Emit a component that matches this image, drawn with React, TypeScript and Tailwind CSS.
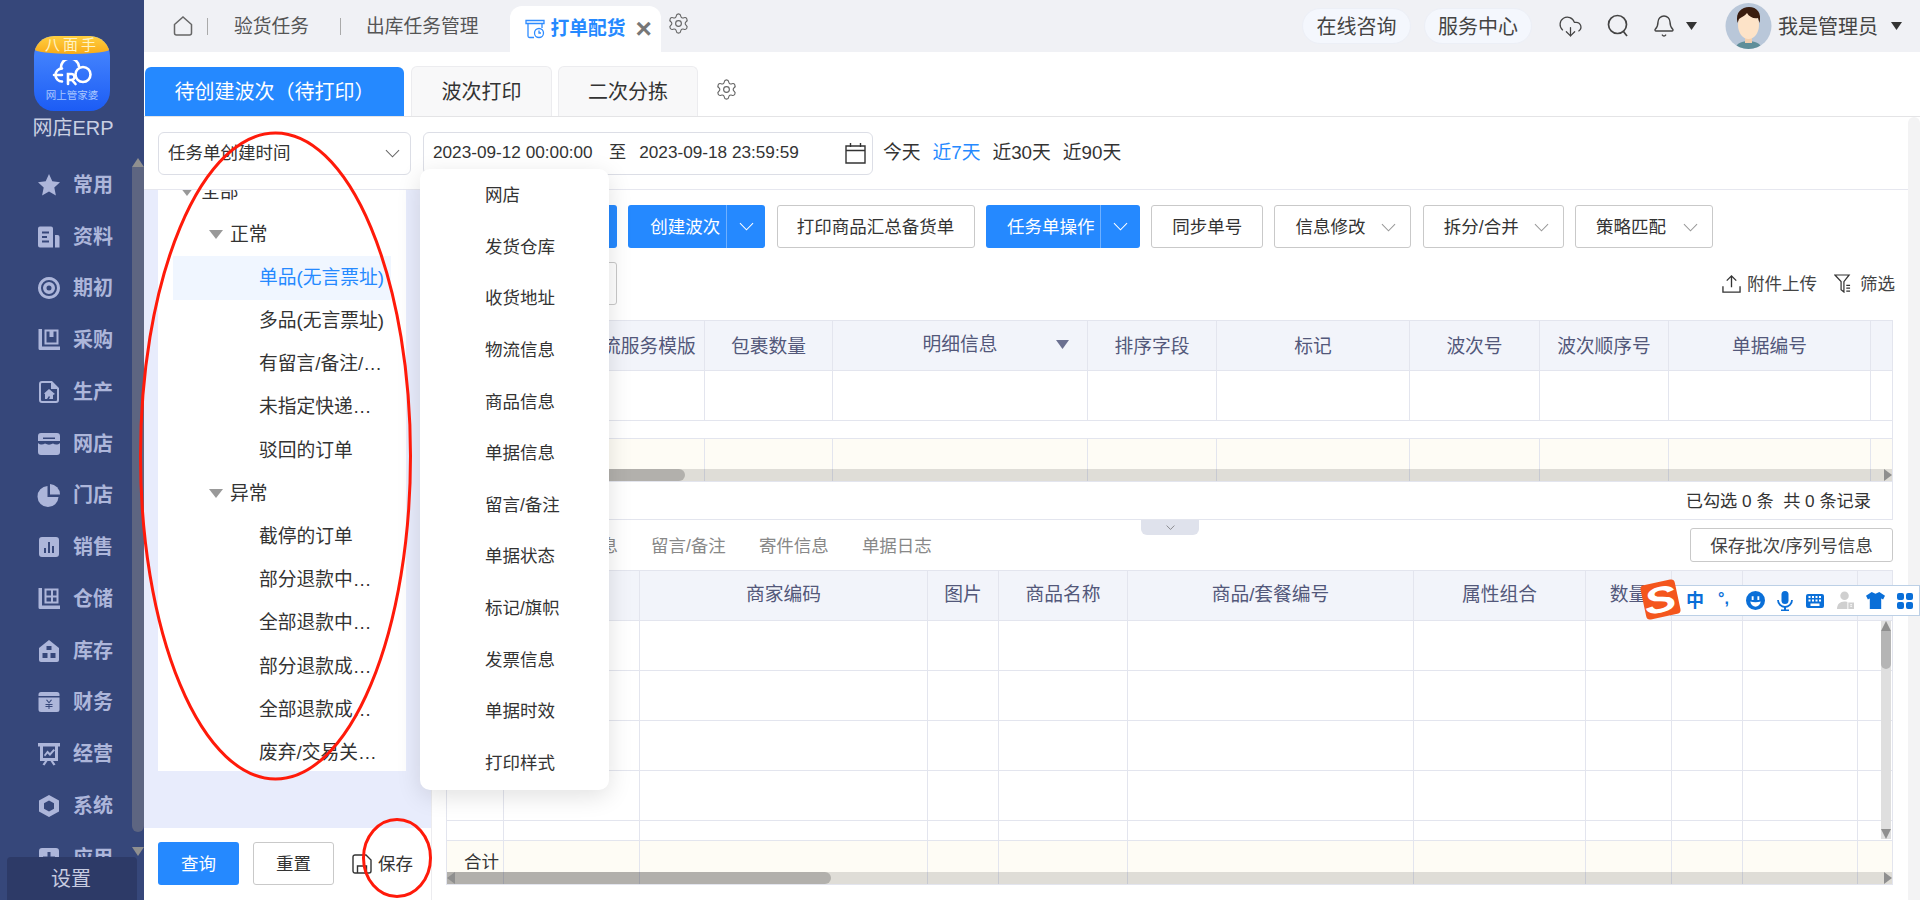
import { Bell, CloudDownload, Settings } from 'lucide-react';
import type { ReactNode } from 'react';

const line = 'border-[#e3e5ee]';

function Chevron({ className = 'w-[15px] h-[9px] text-[#888]' }: { className?: string }) {
  return (
    <svg viewBox="0 0 16 9" className={`shrink-0 ${className}`} fill="none" stroke="currentColor" strokeWidth="1.1">
      <path d="M1 1l7 7 7-7" />
    </svg>
  );
}

function Caret({ className = 'w-[11px] h-[8px] text-[#333]' }: { className?: string }) {
  return (
    <svg viewBox="0 0 10 8" className={`shrink-0 ${className}`} fill="currentColor" preserveAspectRatio="none">
      <path d="M0 0h10L5 8z" />
    </svg>
  );
}

const navIcons: Record<string, ReactNode> = {
  常用: <path d="M12 1l3.300 7.300 7.700.9-5.700 5.300 1.600 8L12 18.400 5.100 22.500l1.600-8L1 9.200l7.700-.9z" />,
  资料: (
    <>
      <path fillRule="evenodd" d="M1 3.500A2 2 0 013 1.500h11a2 2 0 012 2v19H3a2 2 0 01-2-2zM5 6.500v2h7v-2zM5 11v2h5v-2zM5 15.500v2h7v-2z" />
      <path d="M18 10h2.500a2 2 0 012 2v10.500H18z" />
    </>
  ),
  期初: (
    <path fillRule="evenodd" d="M12 1a11 11 0 11-.01 0zm0 3a8 8 0 100 16 8 8 0 000-16zm0 2a6 6 0 110 12 6 6 0 010-12zm0 3.500a2.500 2.500 0 100 5 2.500 2.500 0 000-5z" />
  ),
  采购: (
    <path fillRule="evenodd" d="M1.500 1h3.500v17.500h18V22H3a1.500 1.500 0 01-1.500-1.500zM7.500 1.500h14v15h-14zm2 2v11h10v-11h-3v5.500h-4V3.500z" />
  ),
  生产: (
    <path fillRule="evenodd" d="M5 1h10l7 7v12a3 3 0 01-3 3H5a3 3 0 01-3-3V4a3 3 0 013-3zm0 2a1 1 0 00-1 1v16a1 1 0 001 1h14a1 1 0 001-1V9h-6V3zm7 6l6 5-2 1v4h-4l1-2-1-1-2 3H8v-5l-1-.5z" />
  ),
  网店: (
    <path fillRule="evenodd" d="M4 1h16a3 3 0 013 3v5H1V4a3 3 0 013-3zM1 11c2 2 5 2 7 .5 2.500 1.500 5.500 1.500 8 0 2 1.500 5 1.500 7-.5v9a3 3 0 01-3 3H4a3 3 0 01-3-3zm5-5.500v1.500h12V5.500z" />
  ),
  门店: (
    <>
      <path d="M10.500 3v11h11A10.500 10.500 0 1110.500 3z" />
      <path d="M13 1a10.500 10.500 0 0110 10.500H13z" />
    </>
  ),
  销售: <path fillRule="evenodd" d="M5 2h14a3 3 0 013 3v14a3 3 0 01-3 3H5a3 3 0 01-3-3V5a3 3 0 013-3zm2 11v5h2v-5zm4-6v11h2V7zm4 4v7h2v-7z" />,
  仓储: (
    <path fillRule="evenodd" d="M1.500 1h3.500v17.500h18V22H3a1.500 1.500 0 01-1.500-1.500zM7.500 1.500h14v15h-14zm2 2v5h4.500v-5zm6.500 0v5h3.500v-5zm-6.500 7v4h4.500v-4zm6.500 0v4h3.500v-4z" />
  ),
  库存: <path fillRule="evenodd" d="M12 1l10 8v12a2 2 0 01-2 2H4a2 2 0 01-2-2V9zM9.500 7v4h5V7zM5.500 14v5h5v-5zm8 0v5h5v-5z" />,
  财务: (
    <>
      <path d="M4 2h16a2.500 2.500 0 012.500 2.500V6h-21V4.500A2.500 2.500 0 014 2z" />
      <path fillRule="evenodd" d="M1.500 7.500h21v12A2.500 2.500 0 0120 22H4a2.500 2.500 0 01-2.500-2.500zM9 10l3 3.500 3-3.500-1-.5-2 2.500-2-2.500zm-.5 4v1h3v1h-3v1h3v2h1v-2h3v-1h-3v-1h3v-1z" />
    </>
  ),
  经营: (
    <path fillRule="evenodd" d="M1 1h22v3.500h-2V19h-5l2.500 3.500-2 1L13.500 19h-3l-3 4.500-2-1L8 19H3V4.500H1zm5 3.500V16h12V4.500zM7 13l3.500-4.500L13 11l3.500-4 1.500 1.200-5 5.800-2.500-2.500-2.500 3z" />
  ),
  系统: <path fillRule="evenodd" d="M12 1l10 5.500v11L12 23 2 17.500v-11zm0 5.500l-5 2.800v5.400l5 2.800 5-2.800V9.300z" />,
  应用: <path fillRule="evenodd" d="M5 2h14a3 3 0 013 3v14a3 3 0 01-3 3H5a3 3 0 01-3-3V5a3 3 0 013-3zm5.500 4v4.500H6v3h4.500V18h3v-4.500H18v-3h-4.500V6z" />,
};

const navItems = ['常用', '资料', '期初', '采购', '生产', '网店', '门店', '销售', '仓储', '库存', '财务', '经营', '系统', '应用'];

function Logo() {
  return (
    <div className="w-[76px] h-[75px] ml-[34px] rounded-[20px] overflow-hidden bg-gradient-to-b from-[#4d8bff] to-[#1c5cf5] flex flex-col items-center">
      <div className="w-full h-[18px] bg-gradient-to-b from-[#ffcf3f] to-[#f9ab14] rounded-b-[50%_5px] text-[#fff3c4] text-[15px] leading-[18px] tracking-[3px] text-center whitespace-nowrap">八面手</div>
      <svg viewBox="0 0 42 26" className="w-[42px] h-[26px] mt-[6px]" fill="none" stroke="#fff" strokeWidth="2.600" strokeLinecap="round">
        <path d="M3 15h8M11 8.500a6.500 6.500 0 100 13" />
        <path d="M10 8.500a9 9 0 0118-2" />
        <circle cx="32" cy="14.500" r="7.500" />
        <path d="M17 24V14h3.500a3 3 0 010 6H17M21 20l3.500 4" />
      </svg>
      <div className="text-[10.500px] leading-[12px] mt-[3px] text-[#a9c7ff] whitespace-nowrap">网上管家婆</div>
    </div>
  );
}

function Sidebar() {
  return (
    <aside className="relative w-[144px] h-[900px] shrink-0 overflow-hidden bg-[#36477a] pt-[36px]">
      <Logo />
      <div className="mt-[5px] h-[24px] leading-[24px] text-center text-[20px] text-[#c9cfe2] pl-[2px]">网店ERP</div>
      <nav className="mt-[19px]">
        {navItems.map((name) => (
          <div key={name} className="h-[51.750px] flex items-center pl-[37px] gap-[12px] text-[#adb6da]">
            <svg viewBox="0 0 24 24" className="w-[24px] h-[24px] shrink-0" fill="currentColor">
              {navIcons[name]}
            </svg>
            <span className="text-[20px] font-bold">{name}</span>
          </div>
        ))}
      </nav>
      <div className="absolute right-0 top-[167px] w-[12px] h-[665px] bg-[#5d6581] rounded-b-[6px]" />
      <div className="absolute right-0 top-[158px] w-0 h-0 border-x-[6px] border-x-transparent border-b-[9px] border-b-[#8f8f8f]" />
      <div className="absolute right-0 top-[847px] w-0 h-0 border-x-[6px] border-x-transparent border-t-[9px] border-t-[#8f8f8f]" />
      <div className="absolute left-[7px] bottom-0 w-[130px] h-[43px] rounded-t-[4px] bg-[#2d3a67] text-[#c6cbe0] text-[20px] flex items-center justify-center pt-[1px] pr-[2px]">设置</div>
    </aside>
  );
}

function Avatar() {
  return (
    <svg viewBox="0 0 47 46" className="ml-[28px] w-[47px] h-[46px] shrink-0">
      <defs>
        <clipPath id="avatar-clip">
          <circle cx="23.500" cy="23" r="23" />
        </clipPath>
      </defs>
      <g clipPath="url(#avatar-clip)">
        <rect width="47" height="46" fill="#b9c7d9" />
        <path d="M10 46c1-6 8-8 13.500-8s12.500 2 13.500 8z" fill="#5f8e99" />
        <rect x="20" y="30" width="7" height="10" fill="#f3cfae" />
        <ellipse cx="23.500" cy="22" rx="10.500" ry="14" fill="#fde3c8" />
        <path d="M12.500 20C10 9 17 4 24 4c8 0 13 6 10.500 16L33 15c-4 1-9-1-11-5-2 3-6 4-8 6z" fill="#3a1d0f" />
      </g>
    </svg>
  );
}

function TopBar() {
  return (
    <header className="h-[52px] bg-[#f0f1f5] flex items-center shrink-0 text-[18.750px] text-[#555]">
      <svg viewBox="0 0 20 20" className="ml-[29px] w-[20px] h-[20px] text-[#666]" fill="none" stroke="currentColor" strokeWidth="1.500">
        <path d="M1.500 8.500L10 1l8.500 7.500V17a2 2 0 01-2 2h-13a2 2 0 01-2-2z" />
      </svg>
      <div className="ml-[14px] w-px h-[17px] bg-[#aaa]" />
      <span className="ml-[26px] pt-[3px]">验货任务</span>
      <div className="ml-[31px] w-px h-[17px] bg-[#aaa]" />
      <span className="ml-[25px] pt-[3px]">出库任务管理</span>
      <div className="ml-[31px] self-end w-[151px] h-[46px] bg-white rounded-t-[12px] flex items-center pl-[15px]">
        <svg viewBox="0 0 20 20" className="w-[20px] h-[20px] text-[#2f8cff]" fill="none" stroke="currentColor" strokeWidth="1.300">
          <path d="M1 1.500h18v3H1zM3 4.500V17a1.500 1.500 0 001.500 1.500H9M17 4.500V9" />
          <circle cx="14" cy="14" r="4.500" />
          <path d="M14 11.500V14h2" />
        </svg>
        <span className="ml-[6px] font-bold text-[#2589ff] pt-[1px]">打单配货</span>
        <span className="ml-[10px] text-[28px] leading-none font-bold text-[#777]">×</span>
      </div>
      <Settings className="ml-[6px] w-[23px] h-[23px] text-[#666] -mt-[5px]" strokeWidth={1.200} />
      <div className="ml-auto flex items-center">
        <div className="w-[109px] h-[36px] rounded-[18px] bg-[#f4f7fd] border border-[#eceff6] flex items-center justify-center text-[20px] text-[#444] pt-[1px]">在线咨询</div>
        <div className="ml-[13px] w-[108px] h-[36px] rounded-[18px] bg-[#f4f7fd] border border-[#eceff6] flex items-center justify-center text-[20px] text-[#444] pt-[1px]">服务中心</div>
        <CloudDownload className="ml-[26px] w-[25px] h-[25px] text-[#444]" strokeWidth={1.200} />
        <svg viewBox="0 0 22 24" className="ml-[24px] w-[22px] h-[24px] text-[#444]" fill="none" stroke="currentColor" strokeWidth="1.700">
          <circle cx="10.500" cy="10.500" r="9" />
          <path d="M16 17l4 5" />
        </svg>
        <Bell className="ml-[23px] w-[24px] h-[28px] text-[#444]" strokeWidth={1.400} />
        <Caret className="ml-[10px] w-[11px] h-[8px] text-[#333]" />
        <Avatar />
        <span className="ml-[6px] text-[20px] text-[#444] pt-[1px]">我是管理员</span>
        <Caret className="ml-[13px] mr-[18px] w-[11px] h-[8px] text-[#333]" />
      </div>
    </header>
  );
}

function SubTabs() {
  return (
    <div className="h-[65px] shrink-0 border-b border-[#e4e4e6] flex items-end pl-px text-[20px]">
      <div className="w-[259px] h-[49px] bg-[#2589ff] rounded-t-[6px] text-white flex items-center justify-center">待创建波次（待打印）</div>
      <div className="ml-[7px] w-[141px] h-[50px] bg-[#f8f8f9] border border-b-0 border-[#ececef] rounded-t-[6px] text-[#333] flex items-center justify-center">波次打印</div>
      <div className="ml-[6px] w-[140px] h-[50px] bg-[#f8f8f9] border border-b-0 border-[#ececef] rounded-t-[6px] text-[#333] flex items-center justify-center">二次分拣</div>
      <Settings className="ml-[17px] mb-[15px] w-[23px] h-[23px] text-[#666]" strokeWidth={1.200} />
    </div>
  );
}

function FilterRow() {
  return (
    <div className="h-[73px] shrink-0 border-b border-[#e6e7ef] flex items-center pl-[14px]">
      <div className="w-[253px] h-[43px] rounded-[6px] border border-[#dcdee6] flex items-center pl-[9px] pr-[10px] text-[17.500px] text-[#333]">
        <span className="flex-1">任务单创建时间</span>
        <Chevron className="w-[15px] h-[9px] text-[#666]" />
      </div>
      <div className="ml-[12px] w-[450px] h-[43px] rounded-[6px] border border-[#dcdee6] flex items-center pl-[9px] text-[17.200px] text-[#333]">
        <span className="w-[161px] whitespace-nowrap">2023-09-12 00:00:00</span>
        <span className="ml-[15px]">至</span>
        <span className="ml-[13px] w-[161px] whitespace-nowrap">2023-09-18 23:59:59</span>
        <svg viewBox="0 0 21 22" className="ml-[45px] w-[21px] h-[22px] text-[#333]" fill="none" stroke="currentColor" strokeWidth="1.400">
          <path d="M1 4h19v17H1zM1 8.500h19M5.500 1v4M15.500 1v4" />
        </svg>
      </div>
      <div className="ml-[10px] flex items-center gap-[12px] text-[18.750px] text-[#333] pt-[1px]">
        <span>今天</span>
        <span className="text-[#2589ff]">近7天</span>
        <span>近30天</span>
        <span>近90天</span>
      </div>
    </div>
  );
}

type TreeRow = { label: string; group?: boolean; active?: boolean };

const tree: TreeRow[] = [
  { label: '正常', group: true },
  { label: '单品(无言票址)', active: true },
  { label: '多品(无言票址)' },
  { label: '有留言/备注/旗帜' },
  { label: '未指定快递公司' },
  { label: '驳回的订单' },
  { label: '异常', group: true },
  { label: '截停的订单' },
  { label: '部分退款中的订单' },
  { label: '全部退款中的订单' },
  { label: '部分退款成功订单' },
  { label: '全部退款成功订单' },
  { label: '废弃/交易关闭订单' },
];

function LeftPanel() {
  return (
    <div className="w-[288px] shrink-0 border-r border-[#ececef] flex flex-col">
      <div className="h-[638px] bg-[#e8ecfc] px-[14px]">
        <div className="w-[248px] h-[581px] overflow-hidden bg-white">
          <div className="-mt-[20px] text-[18.750px] text-[#333]">
            <div className="h-[43.200px] flex items-center pl-[22px]">
              <Caret className="w-[14px] h-[9px] text-[#999]" />
              <span className="ml-[7px]">全部</span>
            </div>
            {tree.map((row) =>
              row.group ? (
                <div key={row.label} className="h-[43.200px] flex items-center pl-[51px]">
                  <Caret className="w-[14px] h-[9px] text-[#999]" />
                  <span className="ml-[7px]">{row.label}</span>
                </div>
              ) : (
                <div key={row.label} className={`h-[43.200px] mx-[15px] flex items-center pl-[86px] ${row.active ? 'bg-[#f0f6ff] text-[#2589ff]' : ''}`}>
                  <span className="w-[128px] truncate">{row.label}</span>
                </div>
              ),
            )}
          </div>
        </div>
      </div>
      <div className="flex-1 flex items-center pl-[14px] pb-[1px] text-[17.500px]">
        <button className="w-[81px] h-[43px] rounded-[3px] bg-[#2589ff] text-white pt-[1px]">查询</button>
        <button className="ml-[14px] w-[81px] h-[43px] rounded-[3px] border border-[#c9c9c9] text-[#333] pt-[1px]">重置</button>
        <svg viewBox="0 0 20 20" className="ml-[18px] w-[20px] h-[20px] text-[#333]" fill="none" stroke="currentColor" strokeWidth="1.400">
          <path d="M3 1h11l5 5v11a2 2 0 01-2 2H3a2 2 0 01-2-2V3a2 2 0 012-2zM5.500 19v-7h9v7" />
        </svg>
        <span className="ml-[6px] text-[#333] pt-[1px]">保存</span>
      </div>
    </div>
  );
}

function OutlineBtn({ className, children }: { className: string; children: ReactNode }) {
  return (
    <button className={`h-[43px] rounded-[3px] border border-[#c9c9c9] bg-white text-[17.500px] text-[#333] flex items-center pt-[1px] ${className}`}>
      {children}
    </button>
  );
}

function SplitBtn({ label, left, right, pad }: { label: string; left: string; right: string; pad: string }) {
  return (
    <div className="h-[43px] rounded-[3px] bg-[#2589ff] text-white text-[17.500px] flex">
      <div className={`h-full flex items-center border-r border-[#6fb0ff] whitespace-nowrap pt-[1px] ${left} ${pad}`}>{label}</div>
      <div className={`h-full flex items-center justify-center ${right}`}>
        <Chevron className="w-[15px] h-[9px] text-white" />
      </div>
    </div>
  );
}

function MenuBtn({ label, className }: { label: string; className: string }) {
  return (
    <OutlineBtn className={`px-[20px] justify-between ${className}`}>
      <span>{label}</span>
      <Chevron className="-mr-[6px] w-[15px] h-[9px] text-[#999]" />
    </OutlineBtn>
  );
}

function Toolbar() {
  return (
    <>
      <div className="mt-[15px] flex gap-[11.300px]">
        <div className="w-[171px] h-[43px] rounded-[3px] bg-[#2589ff]" />
        <SplitBtn label="创建波次" left="w-[99px]" right="w-[38px]" pad="pl-[22px]" />
        <OutlineBtn className="w-[198px] justify-center">打印商品汇总备货单</OutlineBtn>
        <SplitBtn label="任务单操作" left="w-[115px]" right="w-[39px]" pad="pl-[21px]" />
        <OutlineBtn className="w-[112px] justify-center">同步单号</OutlineBtn>
        <MenuBtn label="信息修改" className="w-[137px]" />
        <MenuBtn label="拆分/合并" className="w-[141px]" />
        <MenuBtn label="策略匹配" className="w-[138px]" />
      </div>
      <div className="mt-[14px] h-[43px] flex items-center text-[17.500px] text-[#444]">
        <OutlineBtn className="w-[171px]">
          <span />
        </OutlineBtn>
        <svg viewBox="0 0 20 20" className="ml-auto w-[19px] h-[19px] text-[#333]" fill="none" stroke="currentColor" strokeWidth="1.400">
          <path d="M10 14V2M5 7l5-5 5 5M1 13v6h18v-6" />
        </svg>
        <span className="ml-[6px] pt-[1px]">附件上传</span>
        <svg viewBox="0 0 18 20" className="ml-[17px] w-[17px] h-[19px] text-[#333]" fill="none" stroke="currentColor" strokeWidth="1.300">
          <path d="M1 1h15l-5.500 7v11l-3-2.500V8zM13 12h4M13 15h4M13 18h4" />
        </svg>
        <span className="ml-[9px] -mr-[2px] pt-[1px]">筛选</span>
      </div>
    </>
  );
}

const upperCols = 'grid grid-cols-[128px_130px_128px_255px_129px_193px_130px_129px_202px_1fr]';
const lowerCols = 'grid grid-cols-[57px_136px_288px_71px_129px_286px_172px_86px_71px_115px_1fr]';

function Row({ cols, cells, className }: { cols: string; cells: number; className: string }) {
  return (
    <div className={`${cols} ${className}`}>
      {Array.from({ length: cells }, (_, i) => (
        <div key={i} className={`border-r last:border-r-0 ${line}`} />
      ))}
    </div>
  );
}

function HeadRow({ cols, labels, pad }: { cols: string; labels: ReactNode[]; pad: string }) {
  return (
    <div className={`${cols} h-[51px] bg-[#f2f4fa] border-y ${line} text-[18.750px] text-[#53587a]`}>
      {labels.map((label, i) => (
        <div key={i} className={`flex items-center justify-center whitespace-nowrap border-r last:border-r-0 ${pad} ${line}`}>
          {label}
        </div>
      ))}
    </div>
  );
}

function UpperTable() {
  return (
    <div className={`mt-[15px] border-x border-b ${line}`}>
      <HeadRow
        cols={upperCols}
        pad="pt-[3px]"
        labels={[
          '',
          '物流服务模版',
          '包裹数量',
          <span key="m" className="relative w-full text-center -mt-[4px]">
            明细信息
            <Caret className="absolute right-[18px] top-[9px] w-[13px] h-[9px] text-[#6b7090]" />
          </span>,
          '排序字段',
          '标记',
          '波次号',
          '波次顺序号',
          '单据编号',
          '',
        ]}
      />
      <Row cols={upperCols} cells={10} className={`h-[50px] border-b ${line}`} />
      <div className="h-[17px]" />
      <div className="relative">
        <Row cols={upperCols} cells={10} className={`h-[44px] bg-[#fefcf5] border-y ${line}`} />
        <div className="absolute left-0 right-0 bottom-[1px] h-[12px] bg-[#000]/[0.12]">
          <div className="h-full w-[238px] rounded-r-[6px] bg-[#000]/[0.2]" />
          <div className="absolute right-0 top-0 w-0 h-0 border-y-[6px] border-y-transparent border-l-[8px] border-l-[#8f8f8f]" />
        </div>
      </div>
      <div className="h-[37px] flex items-center justify-end pr-[21px] pt-[2px] text-[17.200px] text-[#333]">已勾选 0 条&nbsp; 共 0 条记录</div>
    </div>
  );
}

function LowerTabs() {
  return (
    <div className="relative h-[49.500px] flex items-center text-[17.500px]">
      <div className="absolute left-[695px] top-0 w-[58px] h-[15px] rounded-b-[6px] bg-[#dfe2ec] flex items-center justify-center">
        <Chevron className="w-[9px] h-[5px] text-[#555]" />
      </div>
      <div className="pl-[102px] pt-[2px] flex gap-[33px] text-[#888]">
        <span>发货信息</span>
        <span>留言/备注</span>
        <span>寄件信息</span>
        <span>单据日志</span>
      </div>
      <button className="ml-auto w-[203px] h-[34px] mt-[1px] rounded-[3px] border border-[#c9c9c9] text-[#444] pt-[1px]">保存批次/序列号信息</button>
    </div>
  );
}

function LowerTable() {
  return (
    <div className={`relative border-x border-b ${line}`}>
      <HeadRow
        cols={lowerCols}
        pad="pt-[1px]"
        labels={['', '', '商家编码', '图片', '商品名称', '商品/套餐编号', '属性组合', '数量', '', '', '']}
      />
      {[0, 1, 2, 3].map((i) => (
        <Row key={i} cols={lowerCols} cells={11} className={`h-[50px] border-b ${line}`} />
      ))}
      <Row cols={lowerCols} cells={11} className={`h-[20px] border-b ${line}`} />
      <div className="relative">
        <Row cols={lowerCols} cells={11} className="h-[43px] bg-[#fefcf5]" />
        <span className="absolute left-[17px] top-[8px] text-[17.500px] text-[#333]">合计</span>
        <div className="absolute left-0 right-0 bottom-0 h-[12px] bg-[#000]/[0.12]">
          <div className="h-full w-[384px] rounded-r-[6px] bg-[#000]/[0.2]" />
          <div className="absolute left-0 top-0 w-0 h-0 border-y-[6px] border-y-transparent border-r-[8px] border-r-[#8f8f8f]" />
          <div className="absolute right-0 top-0 w-0 h-0 border-y-[6px] border-y-transparent border-l-[8px] border-l-[#8f8f8f]" />
        </div>
      </div>
      <div className="absolute right-[1px] top-[51px] w-[10px] h-[218px] bg-[#dfdfdf]">
        <div className="h-[10px] w-0 border-x-[5px] border-x-transparent border-b-[10px] border-b-[#8f8f8f]" />
        <div className="h-[38px] w-full rounded-b-[5px] bg-[#b5b5b5]" />
        <div className="absolute bottom-0 h-[10px] w-0 border-x-[5px] border-x-transparent border-t-[10px] border-t-[#8f8f8f]" />
      </div>
    </div>
  );
}

const menuItems = ['网店', '发货仓库', '收货地址', '物流信息', '商品信息', '单据信息', '留言/备注', '单据状态', '标记/旗帜', '发票信息', '单据时效', '打印样式'];

function ColumnMenu() {
  return (
    <div className="absolute left-[420px] top-[169px] w-[189px] h-[621px] rounded-[10px] bg-white shadow-[0_6px_24px_rgba(0,0,0,0.12)] pt-[0.500px] text-[17.500px] text-[#333]">
      {menuItems.map((item) => (
        <div key={item} className="h-[51.600px] flex items-center pl-[65px]">
          {item}
        </div>
      ))}
    </div>
  );
}

function ImeBar() {
  return (
    <div className="absolute left-[1670px] top-[585px] w-[250px] h-[31px] bg-white border border-[#bcd0e6] flex items-center text-[#0a6fd8]">
      <div className="absolute -left-[28px] -top-[4px] w-[35px] h-[35px] rounded-[4px] rotate-[-12deg] bg-[#f4561d] flex items-center justify-center text-white text-[36px] leading-none font-bold italic overflow-hidden">
        <span className="scale-x-[1.350]">S</span>
      </div>
      <span className="ml-[15px] w-[18px] text-[18px] leading-none font-bold">中</span>
      <span className="ml-[14px] w-[14px] text-[16px] font-bold leading-none -mt-[4px] whitespace-nowrap">°,</span>
      <svg viewBox="0 0 20 20" className="ml-[14px] w-[19px] h-[19px]" fill="currentColor">
        <path fillRule="evenodd" d="M10 0a10 10 0 110 20 10 10 0 010-20zM6 5.500v4h2v-4zm6 0v4h2v-4zM4.500 11c.5 3.500 3 5.500 5.500 5.500s5-2 5.500-5.500c-3.500 1-7.500 1-11 0z" />
      </svg>
      <svg viewBox="0 0 16 20" className="ml-[12px] w-[16px] h-[20px]" fill="currentColor">
        <rect x="4.500" y="0" width="7" height="13" rx="3.500" />
        <path d="M1 9a7 7 0 0014 0" fill="none" stroke="currentColor" strokeWidth="1.800" />
        <path d="M7 16h2v2.500h3v1.500H4v-1.500h3z" />
      </svg>
      <svg viewBox="0 0 18 14" className="ml-[13px] w-[18px] h-[14px]" fill="currentColor">
        <path fillRule="evenodd" d="M2 0h14a2 2 0 012 2v10a2 2 0 01-2 2H2a2 2 0 01-2-2V2a2 2 0 012-2zm.5 2v2h2V2zm3.500 0v2h2V2zm3.500 0v2h2V2zm3.500 0v2h2V2zM2.500 5.500v2h2v-2zm3.500 0v2h2v-2zm3.500 0v2h2v-2zm3.500 0v2h2v-2zM4.500 9.500V12h9V9.500z" />
      </svg>
      <svg viewBox="0 0 18 20" className="ml-[13px] w-[17px] h-[19px] text-[#cfcfcf]" fill="currentColor">
        <circle cx="8" cy="5" r="4.500" />
        <path d="M0 19c0-5 3-8 8-8 1.500 0 2.500.3 3 .6V19z" />
        <path fillRule="evenodd" d="M12 12h6v7h-6zm2 2v1h2v-1zm0 2v1h2v-1z" />
      </svg>
      <svg viewBox="0 0 20 20" className="ml-[12px] w-[19px] h-[19px]" fill="currentColor">
        <path d="M6 1l4 2 4-2 6 4-2 4-2-1v11H4V8L2 9 0 5z" />
      </svg>
      <svg viewBox="0 0 16 16" className="ml-[12px] w-[16px] h-[16px]" fill="currentColor">
        <rect width="7" height="7" rx="2" />
        <rect x="9" width="7" height="7" rx="2" />
        <rect y="9" width="7" height="7" rx="2" />
        <rect x="9" y="9" width="7" height="7" rx="2" />
      </svg>
    </div>
  );
}

export default function App() {
  return (
    <div className="relative w-[1920px] h-[900px] overflow-hidden flex bg-white font-['Liberation_Sans','Noto_Sans_CJK_SC',sans-serif]">
      <Sidebar />
      <main className="flex-1 flex flex-col min-w-0">
        <TopBar />
        <SubTabs />
        <div className="flex-1 flex min-h-0">
          <div className="flex-1 flex flex-col min-w-0">
            <FilterRow />
            <div className="flex-1 flex min-h-0">
              <LeftPanel />
              <div className="w-[1447px] ml-[14px]">
                <Toolbar />
                <UpperTable />
                <LowerTabs />
                <LowerTable />
              </div>
            </div>
          </div>
          <div className="w-[12px] shrink-0 bg-[#f3f3f4] rounded-t-[6px]" />
        </div>
      </main>
      <ColumnMenu />
      <ImeBar />
      <svg viewBox="0 0 1920 900" className="absolute inset-0 w-[1920px] h-[900px] pointer-events-none" fill="none" stroke="#ff1a0a" strokeWidth="3">
        <ellipse cx="275.500" cy="456" rx="135" ry="323" />
        <ellipse cx="397" cy="858" rx="33.500" ry="38.500" />
      </svg>
    </div>
  );
}
